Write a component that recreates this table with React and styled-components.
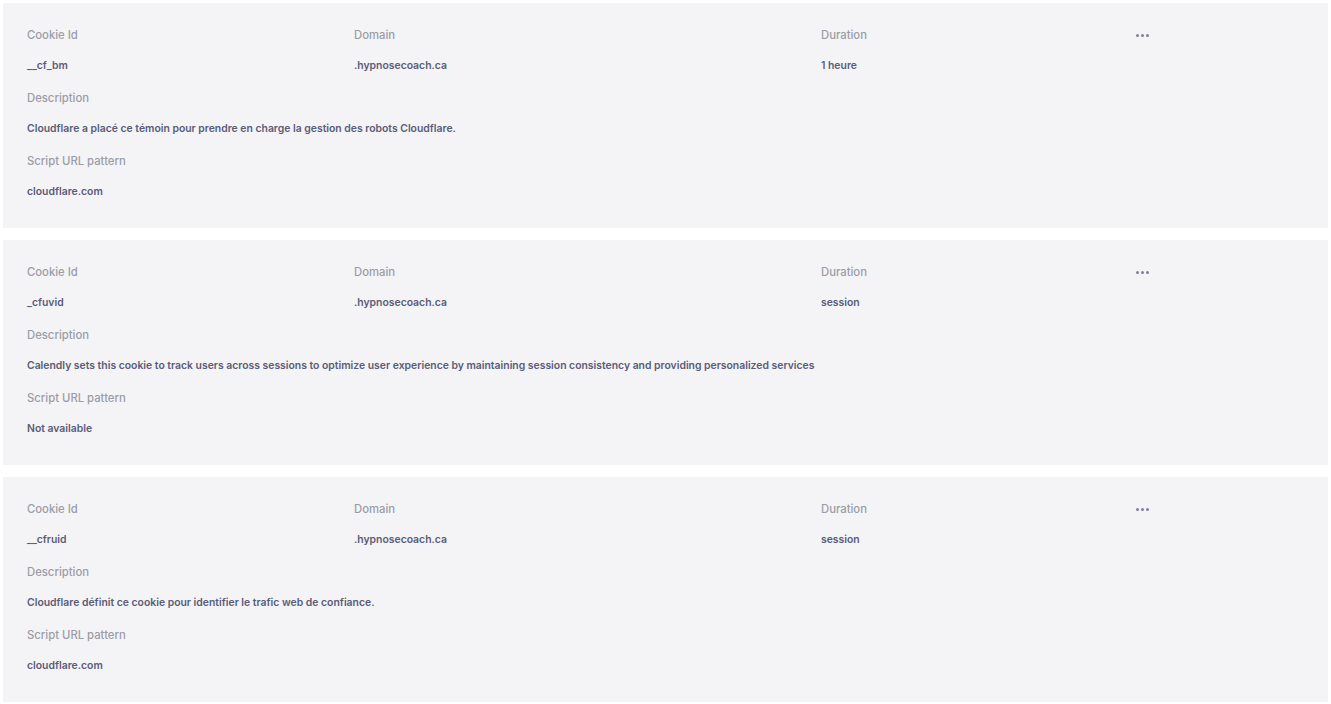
import React from "react";
import styled, { createGlobalStyle } from "styled-components";

const Global = createGlobalStyle`
  html, body { margin: 0; padding: 0; background: #ffffff; }
  body { font-family: Inter, "Noto Sans", sans-serif; -webkit-font-smoothing: antialiased; }
`;

const Page = styled.div`
  display: flex;
  flex-direction: column;
  gap: 12px;
  padding: 3px 3px;
`;

const Card = styled.div`
  background: #f4f4f6;
  height: 225px;
  box-sizing: border-box;
  padding: 22px 24px 0 24px;
  display: flex;
  flex-direction: column;
  gap: 14px;
`;

const TopRow = styled.div`
  display: grid;
  grid-template-columns: 327px 467px 314px 1fr;
`;

const Field = styled.div`
  display: flex;
  flex-direction: column;
`;

const Label = styled.div`
  font-size: 11.3px;
  line-height: 20px;
  height: 20px;
  color: #9b9ca6;
  font-weight: 500;
  margin-bottom: 13px;
`;

const Value = styled.div`
  font-size: 10.4px;
  line-height: 16px;
  height: 16px;
  color: #5a5c78;
  font-weight: 600;
  white-space: nowrap;
`;

const Dots = styled.div`
  display: flex;
  gap: 2px;
  height: 20px;
  align-items: center;
  padding-left: 1px;
  span {
    width: 3px;
    height: 3px;
    border-radius: 50%;
    background: #7f8198;
  }
`;

const cookies = [
  {
    id: "__cf_bm",
    domain: ".hypnosecoach.ca",
    duration: "1 heure",
    description:
      "Cloudflare a placé ce témoin pour prendre en charge la gestion des robots Cloudflare.",
    pattern: "cloudflare.com",
  },
  {
    id: "_cfuvid",
    domain: ".hypnosecoach.ca",
    duration: "session",
    description:
      "Calendly sets this cookie to track users across sessions to optimize user experience by maintaining session consistency and providing personalized services",
    pattern: "Not available",
  },
  {
    id: "__cfruid",
    domain: ".hypnosecoach.ca",
    duration: "session",
    description:
      "Cloudflare définit ce cookie pour identifier le trafic web de confiance.",
    pattern: "cloudflare.com",
  },
];

function CookieCard({ c }) {
  return (
    <Card>
      <TopRow>
        <Field>
          <Label>Cookie Id</Label>
          <Value>{c.id}</Value>
        </Field>
        <Field>
          <Label>Domain</Label>
          <Value>{c.domain}</Value>
        </Field>
        <Field>
          <Label>Duration</Label>
          <Value>{c.duration}</Value>
        </Field>
        <Dots>
          <span />
          <span />
          <span />
        </Dots>
      </TopRow>
      <Field>
        <Label>Description</Label>
        <Value>{c.description}</Value>
      </Field>
      <Field>
        <Label>Script URL pattern</Label>
        <Value>{c.pattern}</Value>
      </Field>
    </Card>
  );
}

export default function App() {
  return (
    <>
      <Global />
      <Page>
        {cookies.map((c) => (
          <CookieCard key={c.id} c={c} />
        ))}
      </Page>
    </>
  );
}
